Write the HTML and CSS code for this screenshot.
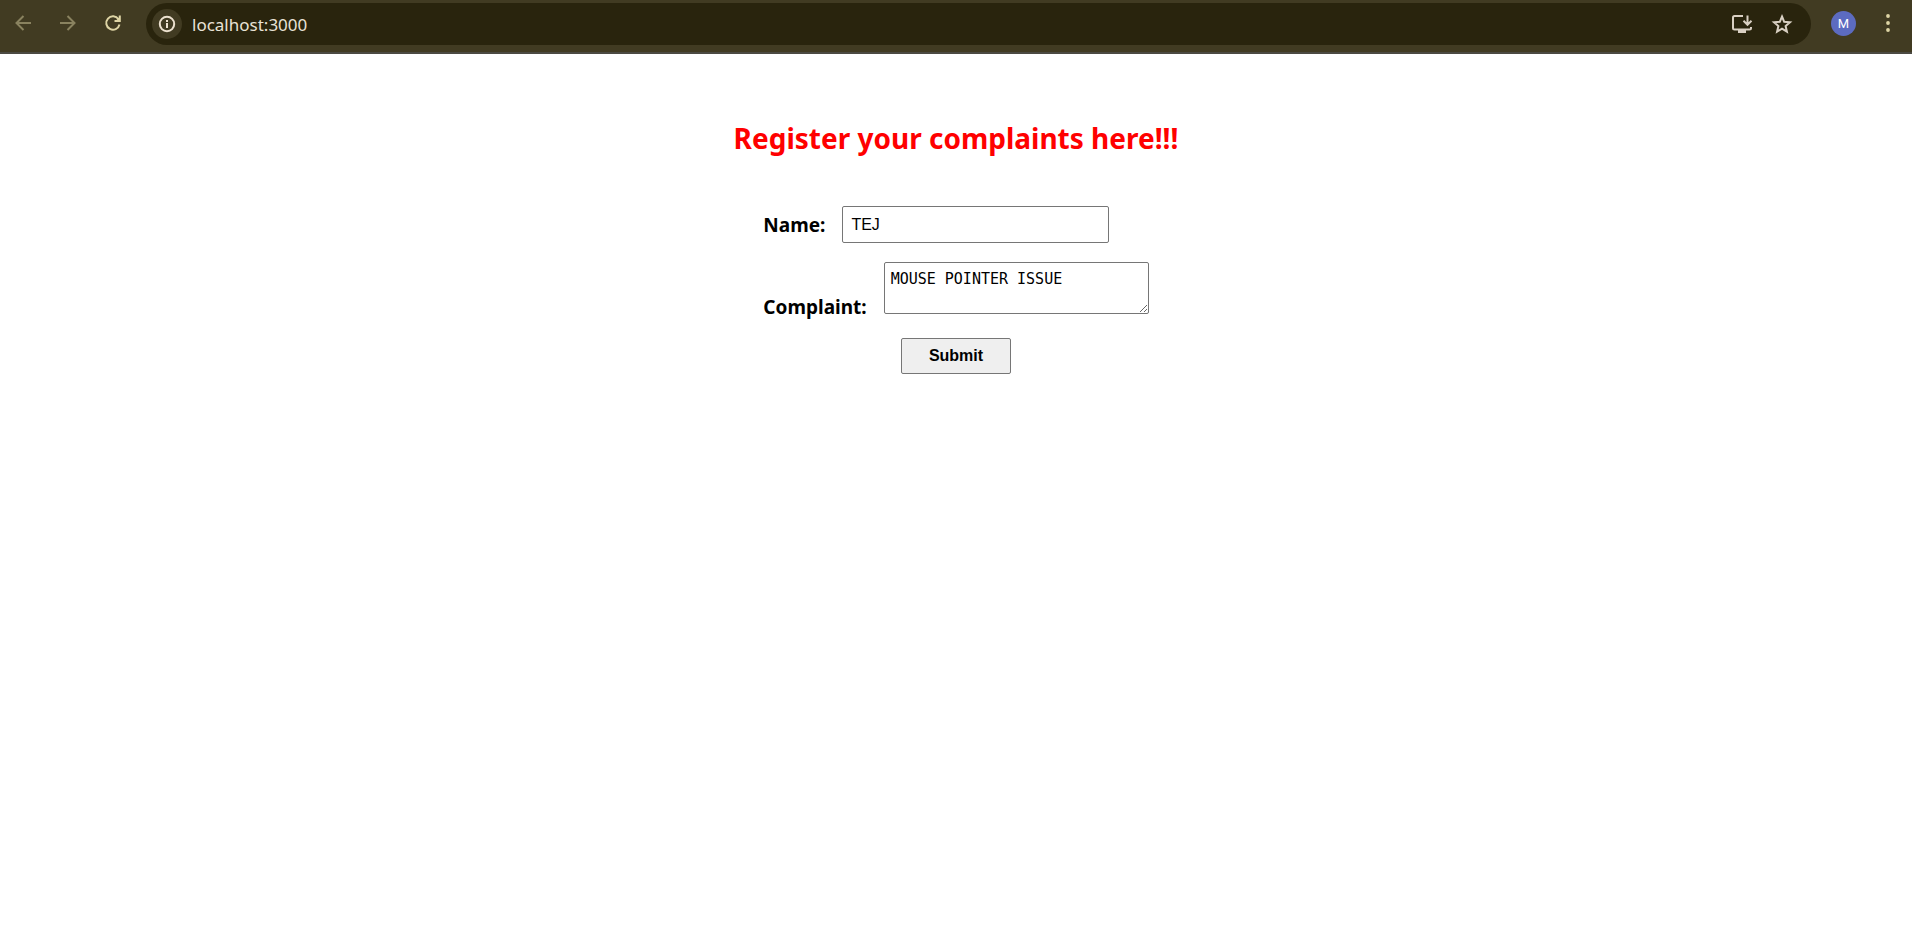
FILE: index.html
```html
<!DOCTYPE html>
<html lang="en">
<head>
<meta charset="utf-8">
<title>Complaints</title>
<link rel="stylesheet" href="styles.css">
</head>
<body>
<header class="toolbar">
  <nav class="nav">
    <button class="icon-button dim" type="button" aria-label="Back"><svg width="24" height="24" viewBox="0 0 24 24"><path d="M20 12H6M12.500 5L5.500 12l7 7"/></svg></button>
    <button class="icon-button dim" type="button" aria-label="Forward"><svg width="24" height="24" viewBox="0 0 24 24"><path d="M4 12h14M11.500 5l7 7-7 7"/></svg></button>
    <button class="icon-button" type="button" aria-label="Reload"><svg width="24" height="24" viewBox="0 0 24 24"><path d="M17.500 8.200A6.700 6.700 0 1 0 18.500 13.500M18.800 4.500V10H13.500"/><path class="solid" d="M19 5.500v4.500h-4.500z"/></svg></button>
  </nav>
  <div class="address">
    <button class="site-info" type="button" aria-label="Site information"><svg width="20" height="20" viewBox="0 0 20 20"><circle cx="10" cy="10" r="7.200"/><path d="M10 9v5M10 6v2"/></svg></button>
    <input class="url" type="text" aria-label="Address" value="localhost:3000">
    <button class="icon-button pale" type="button" aria-label="Install"><svg width="24" height="24" viewBox="0 0 24 24"><path d="M13 4H4.500Q3 4 3 5.500V16q0 1.500 1.500 1.500H19.500Q21 17.500 21 16V15M17.500 3.500V12M13.500 8.800l4 4 4-4"/><path class="solid" d="M8 18h8v3H8z"/></svg></button>
    <button class="icon-button pale" type="button" aria-label="Bookmark"><svg width="24" height="24" viewBox="0 0 24 24"><path d="M12 4.500l2.200 5.300 5.800.5-4.400 3.800 1.300 5.600-4.900-3-4.900 3 1.300-5.600L4 10.300l5.800-.5z"/></svg></button>
  </div>
  <button class="profile" type="button" aria-label="Profile M">M</button>
  <button class="icon-button" type="button" aria-label="Menu"><svg width="24" height="24" viewBox="0 0 24 24"><circle class="solid" cx="12" cy="5" r="1.900"/><circle class="solid" cx="12" cy="12" r="1.900"/><circle class="solid" cx="12" cy="19" r="1.900"/></svg></button>
</header>
<main class="page">
  <h1 class="title">Register your complaints here!!!</h1>
  <form class="form">
    <div class="field field-name">
      <label class="label" for="name">Name:</label>
      <input class="control name" id="name" type="text" value="TEJ">
    </div>
    <div class="field field-complaint">
      <label class="label" for="complaint">Complaint:</label>
      <textarea class="control complaint" id="complaint" spellcheck="false">MOUSE POINTER ISSUE</textarea>
    </div>
    <button class="submit" type="submit">Submit</button>
  </form>
</main>
</body>
</html>
```
FILE: styles.css
```css
* { box-sizing: border-box; }
body {
  margin: 0;
  background: #fff;
  color: #000;
  font-family: "Segoe UI", "Noto Sans", sans-serif;
}
button, input, textarea { margin: 0; }
.toolbar {
  display: flex;
  align-items: center;
  height: 54px;
  padding: 0 12px 6px 11px;
  background: #413b22;
  border-bottom: 2px solid #4b4a42;
}
.nav {
  display: flex;
  gap: 21px;
  margin-right: 21px;
}
.icon-button {
  display: flex;
  padding: 0;
  border: 0;
  background: none;
  color: #ded5a5;
}
.dim { color: #89825f; }
.pale { color: #d9d0c3; }
svg {
  fill: none;
  stroke: currentColor;
  stroke-width: 2;
}
.solid {
  fill: currentColor;
  stroke: none;
}
.address {
  flex: 1;
  display: flex;
  align-items: center;
  gap: 16px;
  height: 42px;
  margin-top: 2px;
  padding: 0 17px 0 6px;
  border-radius: 21px;
  background: #29240d;
}
.site-info {
  display: flex;
  align-items: center;
  justify-content: center;
  width: 30px;
  height: 30px;
  padding: 0;
  border: 0;
  border-radius: 50%;
  background: #413b22;
  color: #ece1cf;
}
.url {
  flex: 1;
  min-width: 0;
  margin-left: -6px;
  padding: 0;
  border: 0;
  background: none;
  color: #e8e2d6;
  font: 17px "Segoe UI", "Noto Sans", sans-serif;
}
.profile {
  width: 25px;
  height: 25px;
  margin: 0 20px;
  padding: 0;
  border: 0;
  border-radius: 50%;
  background: #5c6bc0;
  color: #fff;
  font: 13px Roboto, sans-serif;
}
.page {
  display: flex;
  flex-direction: column;
  align-items: center;
  padding: 64px 16px;
}
.title {
  margin: 0;
  color: #f00;
  font-size: 28px;
  line-height: 40px;
}
.form {
  display: flex;
  flex-direction: column;
  margin-top: 48px;
}
.field {
  display: flex;
  gap: 17px;
}
.field-name { align-items: center; }
.field-complaint {
  align-items: flex-end;
  margin-top: 19px;
}
.label {
  font-size: 19px;
  font-weight: 700;
  line-height: 28px;
}
.field-complaint .label { margin-bottom: -7px; }
.control {
  border: 1px solid #767676;
  border-radius: 2px;
  background: #fff;
  color: #000;
}
.name {
  width: 267px;
  height: 37px;
  padding: 0 8px;
  font: 16px "Liberation Sans", Arial, sans-serif;
}
.complaint {
  width: 265px;
  height: 52px;
  padding: 7px 6px;
  font: 15px "DejaVu Sans Mono", monospace;
}
.submit {
  align-self: center;
  width: 110px;
  height: 36px;
  margin-top: 24px;
  padding: 0;
  border: 1px solid #767676;
  border-radius: 2px;
  background: #efefef;
  color: #000;
  font: bold 16px "Liberation Sans", Arial, sans-serif;
}
```
